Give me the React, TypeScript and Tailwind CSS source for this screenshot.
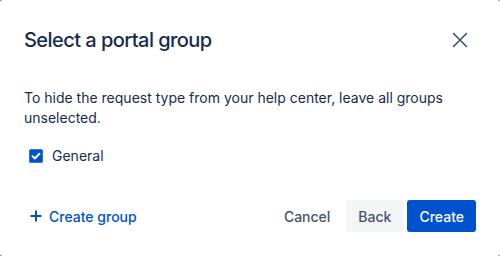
import React from "react";

export default function App() {
  return (
    <div className="w-[500px] h-[256px] bg-[#7a869a]" style={{ fontFamily: "Inter, 'Noto Sans', sans-serif" }}>
      <div className="w-[500px] h-[256px] bg-white rounded-[3px] flex flex-col">
        <div className="flex items-center justify-between pt-6 px-6 h-[56px]">
          <h1 className="text-[20px] leading-6 font-medium text-[#172B4D] tracking-[-0.55px]">Select a portal group</h1>
          <button className="w-8 h-8 flex items-center justify-center text-[#42526E]">
            <svg width="16" height="16" viewBox="0 0 16 16" fill="none">
              <path d="M1.5 1.5L14.5 14.5M14.5 1.5L1.5 14.5" stroke="currentColor" strokeWidth="1.6" strokeLinecap="round" />
            </svg>
          </button>
        </div>
        <div className="px-6 pt-[32px] text-[14px] leading-5 text-[#172B4D]">
          <p>To hide the request type from your help center, leave all groups unselected.</p>
          <label className="flex items-center mt-[18px] h-5 pl-[5px]">
            <svg width="14" height="14" viewBox="0 0 14 14">
              <rect x="0" y="0" width="14" height="14" rx="2.5" fill="#0052CC" />
              <rect x="0.5" y="0.5" width="13" height="13" rx="2" fill="none" stroke="#2F7AEB" strokeWidth="1" />
              <path d="M3.6 7.2L6 9.4L10.4 4.8" stroke="white" strokeWidth="2" fill="none" strokeLinecap="round" strokeLinejoin="round" />
            </svg>
            <span className="ml-[9px]">General</span>
          </label>
        </div>
        <div className="mt-auto flex items-center justify-between px-6 pb-6">
          <button className="flex items-center h-8 pl-[6px] text-[14px] font-medium text-[#0052CC]">
            <svg width="12" height="12" viewBox="0 0 12 12">
              <path d="M6 0.5V11.5M0.5 6H11.5" stroke="#0052CC" strokeWidth="2" />
            </svg>
            <span className="ml-[7px]">Create group</span>
          </button>
          <div className="flex items-center gap-1 text-[14px] font-medium">
            <button className="h-8 px-3 rounded-[3px] text-[#42526E]">Cancel</button>
            <button className="h-8 px-3 rounded-[3px] bg-[#F4F5F7] text-[#42526E]">Back</button>
            <button className="h-8 px-3 rounded-[3px] bg-[#0052CC] text-white">Create</button>
          </div>
        </div>
      </div>
    </div>
  );
}
